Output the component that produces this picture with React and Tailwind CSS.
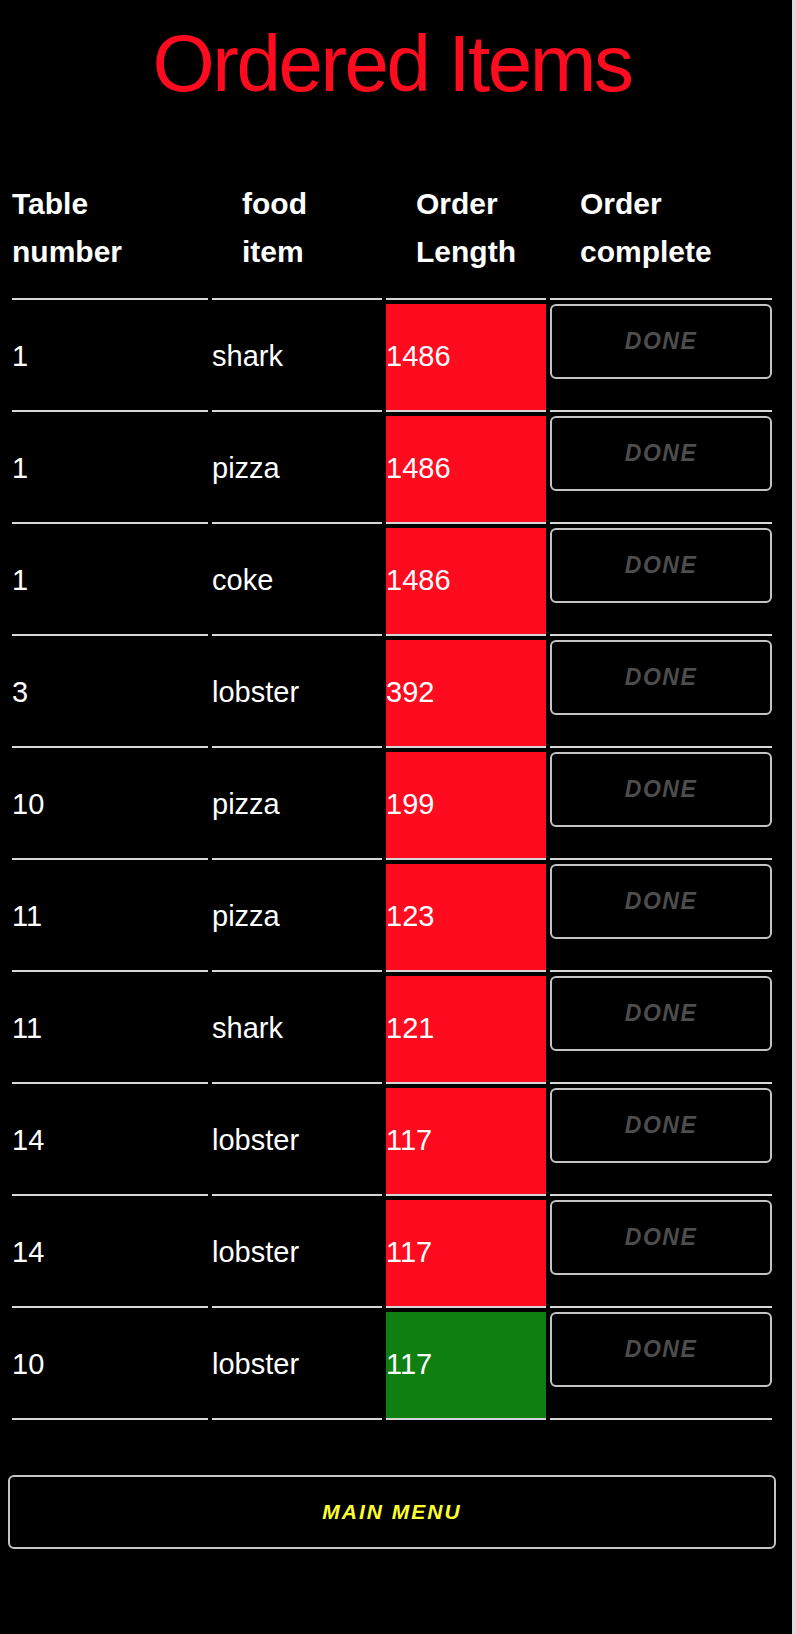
import React from 'react';

const orders = [
  { table: '1', item: 'shark', length: 1486, late: true },
  { table: '1', item: 'pizza', length: 1486, late: true },
  { table: '1', item: 'coke', length: 1486, late: true },
  { table: '3', item: 'lobster', length: 392, late: true },
  { table: '10', item: 'pizza', length: 199, late: true },
  { table: '11', item: 'pizza', length: 123, late: true },
  { table: '11', item: 'shark', length: 121, late: true },
  { table: '14', item: 'lobster', length: 117, late: true },
  { table: '14', item: 'lobster', length: 117, late: true },
  { table: '10', item: 'lobster', length: 117, late: false },
];

const cell = 'h-[108px] border-b-2 border-[#d6d6d6] flex items-center';

const OrderRow = ({ order }) => {
  return (
    <>
      <div className={cell}>{order.table}</div>
      <div className={cell}>{order.item}</div>
      <div className={`${cell} ${order.late ? 'bg-[#fe0b1f]' : 'bg-[#0f7f12]'}`}>{order.length}</div>
      <div className="h-[108px] border-b-2 border-[#d6d6d6]">
        <button className="w-full h-[75px] border-2 border-[#c4c4c4] rounded-md bg-black text-[#4d4d4d] text-[23px] font-bold italic tracking-[1.5px]">
          DONE
        </button>
      </div>
    </>
  );
};

export default function App() {
  return (
    <div className="flex min-h-[1634px] bg-[#dcdcdc]" style={{ fontFamily: '"Liberation Sans", Arial, sans-serif' }}>
      <div className="w-[792px] bg-black text-white">
        {/* Title */}
        <h1 className="pt-[24px] pr-[8px] text-center text-[80px] leading-[80px] tracking-[-2.5px] text-[#fe0b1f]">
          Ordered Items
        </h1>

        {/* Table */}
        <div className="mt-[76px] pl-[12px] grid grid-cols-[196px_170px_160px_222px] gap-x-[4px] gap-y-[4px] text-[29px]">
          <div className="border-b-2 border-[#d6d6d6] pb-[22px] text-[30px] font-bold leading-[48px]">
            Table<br />number
          </div>
          <div className="border-b-2 border-[#d6d6d6] pb-[22px] pl-[30px] text-[30px] font-bold leading-[48px]">
            food<br />item
          </div>
          <div className="border-b-2 border-[#d6d6d6] pb-[22px] pl-[30px] text-[30px] font-bold leading-[48px]">
            Order<br />Length
          </div>
          <div className="border-b-2 border-[#d6d6d6] pb-[22px] pl-[30px] text-[30px] font-bold leading-[48px]">
            Order<br />complete
          </div>

          {orders.map((order, idx) => (
            <OrderRow key={idx} order={order} />
          ))}
        </div>

        {/* Main menu */}
        <div className="pl-[8px] w-[776px] mt-[55px]">
          <button className="w-full h-[74px] border-2 border-[#c4c4c4] rounded-md bg-black text-[#ffff2e] text-[21px] font-bold italic tracking-[2px]">
            MAIN MENU
          </button>
        </div>
      </div>
      <div className="w-[4px] bg-[#dcdcdc]" />
    </div>
  );
}
